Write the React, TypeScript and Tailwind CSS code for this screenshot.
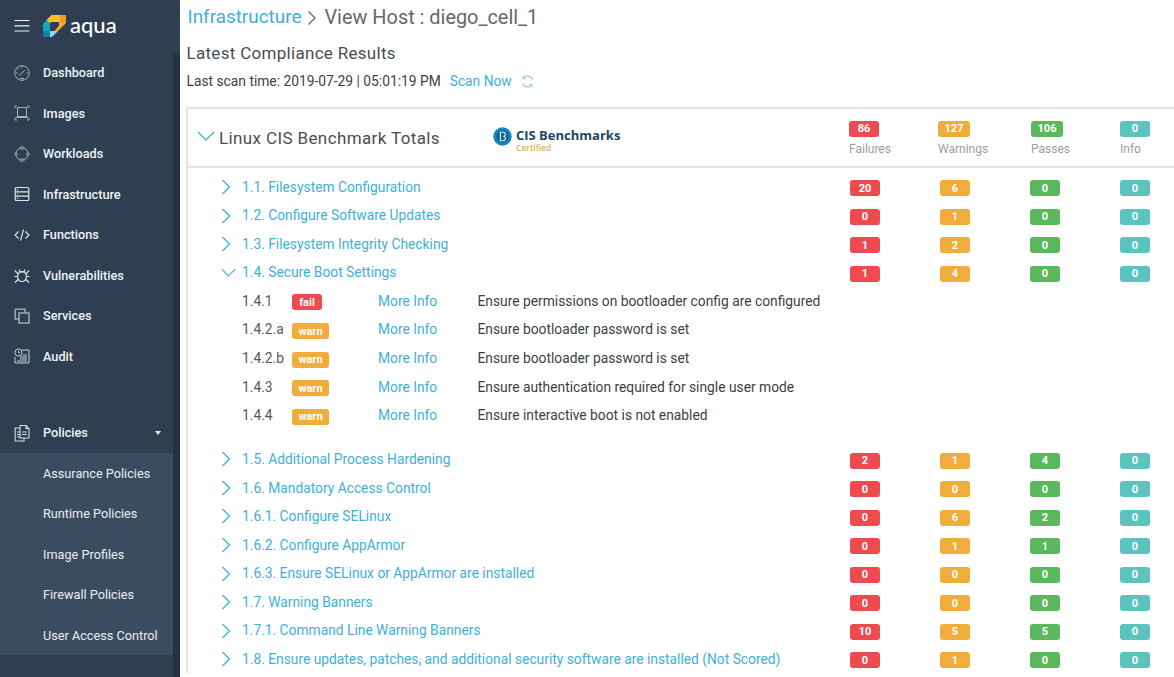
import React from "react";

const S = { fill: "none", stroke: "#aab1ba", strokeWidth: 1 } as const;

const icons: Record<string, React.ReactNode> = {
  Dashboard: (
    <g {...S}>
      <circle cx="10" cy="10" r="7.3" />
      <path d="M7 12.5 L12.8 7.4" />
      <path d="M10 2.7v1.8M3.8 10h1.6M14.6 10h1.6M5.5 5.5l1.1 1.1M8 15.5h4" />
    </g>
  ),
  Images: (
    <g {...S}>
      <path d="M3 5V3h2M15 3h2v2M3 15v2h2M15 17h2v-2" />
      <rect x="5.5" y="4.5" width="9" height="9" />
      <path d="M3.5 14.5h13" />
    </g>
  ),
  Workloads: (
    <g {...S}>
      <circle cx="10" cy="10" r="6.2" />
      <rect x="8" y="2.8" width="4" height="2.2" rx="1" fill="#2f3e50" />
      <rect x="8" y="15" width="4" height="2.2" rx="1" fill="#2f3e50" />
      <rect x="2.8" y="8.8" width="2.4" height="2.4" rx="1" fill="#2f3e50" />
      <rect x="14.8" y="8.8" width="2.4" height="2.4" rx="1" fill="#2f3e50" />
    </g>
  ),
  Infrastructure: (
    <g fill="none" stroke="#dfe3e7" strokeWidth="1.2">
      <rect x="3.2" y="3.5" width="13.6" height="13" rx="1" />
      <path d="M3.2 7.8h13.6M3.2 12.2h13.6M5 5.7h1M5 10h1M5 14.4h1" />
    </g>
  ),
  Functions: (
    <g fill="none" stroke="#e6e9ec" strokeWidth="1.1">
      <path d="M6.5 6.5 3 10l3.5 3.5M13.5 6.5 17 10l-3.5 3.5M11.5 4.5l-3 11" />
    </g>
  ),
  Vulnerabilities: (
    <g fill="none" stroke="#e6e9ec" strokeWidth="1.1">
      <ellipse cx="10" cy="11.5" rx="4.4" ry="5" />
      <path d="M7 4.5 8 7M13 4.5 12 7M8 7h4M2.8 5.5l3.4 3.6M17.2 5.5l-3.4 3.6M2.5 11.5h3M17.5 11.5h-3M3 17.5l3.2-3M17 17.5l-3.2-3" />
    </g>
  ),
  Services: (
    <g fill="none" stroke="#9aa3ad" strokeWidth="1.6">
      <path d="M7 13H3.2V3.2H13V7" />
      <rect x="7" y="7" width="10" height="10" />
    </g>
  ),
  Audit: (
    <g fill="none" stroke="#c9ced4" strokeWidth="1">
      <path d="M10 4h7v13H3v-6" />
      <circle cx="6.5" cy="6.5" r="3.6" />
      <path d="M6.5 4.8v1.9h1.6M8 11h7M8 13h7M5 15h10M11 9h4" />
    </g>
  ),
  Policies: (
    <g fill="none" stroke="#d7dbdf" strokeWidth="1.1">
      <path d="M8 5H3.2v13H12v-3" />
      <path d="M8 2.5h6l3 3V15H8z" />
      <path d="M14 2.5v3h3M5 9h3M5 11.5h3M5 14h3M10 9h5M10 11.5h5" />
    </g>
  ),
};

function NavItem({ label }: { label: string }) {
  return (
    <div className="flex items-center h-[40.55px]">
      <svg viewBox="0 0 20 20" className="w-5 h-5 ml-[12px] mr-[11px] shrink-0">
        {icons[label]}
      </svg>
      <span className="text-[12.7px] font-medium text-[#eef2f6]">{label}</span>
    </div>
  );
}

function Logo() {
  return (
    <svg viewBox="0 0 23 22" className="w-[23px] h-[22px] shrink-0">
      <polygon points="8.5,0 17,0 17,7 8,7 7,8.5 3.5,5" fill="#f5c52b" />
      <polygon points="17,0 23,0 23,7 17,7" fill="#f39a20" />
      <polygon points="16,7 23,7 23,8 15,16 11.5,16 16,10.5" fill="#f6a821" />
      <polygon points="0,9 3.5,5 7,8.5 7,16 0,16" fill="#17a3c4" />
      <polygon points="0,16 7,16 7,22 0,22" fill="#0f7fa3" />
      <polygon points="7,16 15,16 9,22 7,22" fill="#8fd3ec" />
    </svg>
  );
}

function Chevron({ open = false, big = false }: { open?: boolean; big?: boolean }) {
  return open ? (
    <svg viewBox="0 0 18 10" className={big ? "w-[18px] h-[10px]" : "w-[15px] h-[9px]"}>
      <path d="M1 1l8 8 8-8" fill="none" stroke="#45b3dc" strokeWidth="1.4" />
    </svg>
  ) : (
    <svg viewBox="0 0 10 16" className="w-[10px] h-[16px]">
      <path d="M1.5 1l7 7-7 7" fill="none" stroke="#45b3dc" strokeWidth="1.4" />
    </svg>
  );
}

const colors = {
  r: "bg-[#ee4b50]",
  y: "bg-[#f0ad3c]",
  g: "bg-[#5cb85c]",
  t: "bg-[#5bc4bf]",
};

function Badge({ c, children, w = "w-[30px]" }: { c: keyof typeof colors; children: React.ReactNode; w?: string }) {
  return (
    <span
      className={`${colors[c]} ${w} h-[16px] rounded-[3px] inline-flex items-center justify-center text-[11px] font-bold leading-none text-white`}
    >
      {children}
    </span>
  );
}

type Row = [string, number, number, number, number, boolean?];

const firstRows: Row[] = [
  ["1.1. Filesystem Configuration", 20, 6, 0, 0],
  ["1.2. Configure Software Updates", 0, 1, 0, 0],
  ["1.3. Filesystem Integrity Checking", 1, 2, 0, 0],
  ["1.4. Secure Boot Settings", 1, 4, 0, 0, true],
];

const details: [string, string, string][] = [
  ["1.4.1", "fail", "Ensure permissions on bootloader config are configured"],
  ["1.4.2.a", "warn", "Ensure bootloader password is set"],
  ["1.4.2.b", "warn", "Ensure bootloader password is set"],
  ["1.4.3", "warn", "Ensure authentication required for single user mode"],
  ["1.4.4", "warn", "Ensure interactive boot is not enabled"],
];

const lastRows: Row[] = [
  ["1.5. Additional Process Hardening", 2, 1, 4, 0],
  ["1.6. Mandatory Access Control", 0, 0, 0, 0],
  ["1.6.1. Configure SELinux", 0, 6, 2, 0],
  ["1.6.2. Configure AppArmor", 0, 1, 1, 0],
  ["1.6.3. Ensure SELinux or AppArmor are installed", 0, 0, 0, 0],
  ["1.7. Warning Banners", 0, 0, 0, 0],
  ["1.7.1. Command Line Warning Banners", 10, 5, 5, 0],
  ["1.8. Ensure updates, patches, and additional security software are installed (Not Scored)", 0, 1, 0, 0],
];

function SectionRow({ row }: { row: Row }) {
  const [name, a, b, c, d, open] = row;
  return (
    <div className="grid grid-cols-[662px_90px_90px_90px_1fr] items-center h-[28.55px]">
      <div className="flex items-center">
        <span className="w-[54px] pl-[33px] flex items-center">
          <Chevron open={open} />
        </span>
        <span className="text-[13.8px] text-[#3fb0da] whitespace-nowrap">{name}</span>
      </div>
      <div className="flex pt-[2.4px]">
        <Badge c="r">{a}</Badge>
      </div>
      <div className="flex pt-[2.4px]">
        <Badge c="y">{b}</Badge>
      </div>
      <div className="flex pt-[2.4px]">
        <Badge c="g">{c}</Badge>
      </div>
      <div className="flex pt-[2.4px]">
        <Badge c="t">{d}</Badge>
      </div>
    </div>
  );
}

function Total({ c, value, label, w }: { c: keyof typeof colors; value: number; label: string; w: string }) {
  return (
    <div className="flex flex-col items-start gap-[5px] pt-[2px]">
      <Badge c={c} w={w}>
        {value}
      </Badge>
      <span className="text-[12px] leading-[14px] text-[#9b9ea1]">{label}</span>
    </div>
  );
}

export default function App() {
  return (
    <div className="flex w-[1174px] h-[677px] overflow-hidden bg-white font-['Roboto',sans-serif]">
      <aside className="w-[173px] shrink-0 bg-[#2f3e50]">
        <div className="flex items-center h-[52.3px]">
          <svg viewBox="0 0 20 20" className="w-5 h-5 ml-[12px] mr-[11px]">
            <path d="M2.5 4.5h15M2.5 9.8h15M2.5 15h15" stroke="#f2f4f6" strokeWidth="1.2" />
          </svg>
          <Logo />
          <span className="ml-[4px] text-[22px] leading-none font-medium text-white font-['Lato',sans-serif] -mt-[3px]">aqua</span>
        </div>
        <div>
          {["Dashboard", "Images", "Workloads", "Infrastructure", "Functions", "Vulnerabilities", "Services", "Audit"].map((l) => (
            <NavItem key={l} label={l} />
          ))}
        </div>
        <div className="h-[35.8px]" />
        <div className="relative">
          <NavItem label="Policies" />
          <span className="absolute right-[12px] top-[19px] w-0 h-0 border-x-[3.5px] border-x-transparent border-t-[4px] border-t-[#e6e9ec]" />
        </div>
        <div className="mt-[1.5px] bg-[#3b4c61] h-[202px]">
          <div className="-mt-[1.4px]">
            {["Assurance Policies", "Runtime Policies", "Image Profiles", "Firewall Policies", "User Access Control"].map((l) => (
              <div key={l} className="h-[40.5px] flex items-center pl-[43px] text-[12.7px] text-[#e8edf2]">
                {l}
              </div>
            ))}
          </div>
        </div>
      </aside>
      <div className="w-[7px] shrink-0 bg-[#2f3e50] flex flex-col">
        <div className="h-[53px]" />
        <div className="flex-1 bg-[#253240] rounded-t-[3px]" />
      </div>
      <main className="flex-1 min-w-0 pl-[6px]">
        <div className="h-[36px] flex items-center pl-[1.5px] -mt-[0.5px] text-[#65686b] whitespace-nowrap">
          <span className="text-[#3fb0da] text-[18.9px]">Infrastructure</span>
          <svg viewBox="0 0 10 16" className="w-[10px] h-[16px] ml-[6px] mr-[7px]">
            <path d="M1.5 1.5 8 8l-6.5 6.5" fill="none" stroke="#666" strokeWidth="1.3" />
          </svg>
          <span className="text-[19.9px]">View Host : diego_cell_1</span>
        </div>
        <div className="h-[34px] pt-[3px] flex items-center pl-[0.5px] text-[17px] tracking-[0.3px] text-[#4a4d50]">Latest Compliance Results</div>
        <div className="h-[24px] flex items-center pl-[0.5px] text-[13.8px] text-[#3c3f42] whitespace-nowrap">
          Last scan time: 2019-07-29 | 05:01:19 PM
          <span className="ml-[9px] text-[#3fb0da]">Scan Now</span>
          <svg viewBox="0 0 16 16" className="w-[15px] h-[15px] ml-[8px]">
            <path d="M13.5 6A6 6 0 0 0 3.2 4.5M2.5 10a6 6 0 0 0 10.3 1.5" fill="none" stroke="#8fcde6" strokeWidth="1.2" />
            <path d="M3.2 2v3h3M12.8 14v-3h-3" fill="none" stroke="#8fcde6" strokeWidth="1.1" />
          </svg>
        </div>
        <div className="mt-[13px] w-[1100px] border-2 border-[#e3e3e3] border-b-0">
          <div className="grid grid-cols-[661px_89px_93px_89px_1fr] items-center h-[59px] border-b-2 border-[#e3e3e3]">
            <div className="flex items-center">
              <span className="pl-[9px] w-[31px] flex items-center -mt-[3px]">
                <Chevron open big />
              </span>
              <span className="text-[17px] tracking-[0.38px] text-[#4a4d50] w-[274px] pt-[3px] whitespace-nowrap">Linux CIS Benchmark Totals</span>
              <svg viewBox="0 0 20 20" className="w-[19px] h-[19px] -mt-[1px] shrink-0">
                <circle cx="10" cy="10" r="9.7" fill="#1783bd" />
                <circle cx="10" cy="10" r="6.4" fill="#0f5f90" />
                <path d="M7.8 5.5h3a2 2 0 0 1 0 4.4 2.1 2.1 0 0 1 0 4.6h-3z" fill="none" stroke="#dff1fa" strokeWidth="1.2" />
              </svg>
              <div className="ml-[4px] flex flex-col font-['Open_Sans',sans-serif] mt-[6px]">
                <span className="text-[13px] leading-[15px] font-bold text-[#1d4566] whitespace-nowrap">CIS Benchmarks</span>
                <span className="text-[8.5px] leading-[10px] font-semibold text-[#e0b262]">Certified</span>
              </div>
            </div>
            <Total c="r" value={86} label="Failures" w="w-[30px]" />
            <Total c="y" value={127} label="Warnings" w="w-[32px]" />
            <Total c="g" value={106} label="Passes" w="w-[32px]" />
            <Total c="t" value={0} label="Info" w="w-[30px]" />
          </div>
          <div className="pt-[5.3px]">
            {firstRows.map((r) => (
              <SectionRow key={r[0]} row={r} />
            ))}
            {details.map(([id, st, text]) => (
              <div key={id} className="flex items-center h-[28.55px] text-[13.8px] whitespace-nowrap">
                <span className="w-[54px] shrink-0" />
                <span className="w-[50px] text-[#55585b]">{id}</span>
                <span className="w-[86px] flex pt-[2.4px]">
                  <Badge c={st === "fail" ? "r" : "y"} w={st === "fail" ? "w-[30px]" : "w-[37px]"}>
                    {st}
                  </Badge>
                </span>
                <span className="w-[99.5px] text-[#3fb0da]">More Info</span>
                <span className="text-[#3c3f42]">{text}</span>
              </div>
            ))}
            <div className="h-[15.4px]" />
            {lastRows.map((r) => (
              <SectionRow key={r[0]} row={r} />
            ))}
          </div>
        </div>
      </main>
    </div>
  );
}
